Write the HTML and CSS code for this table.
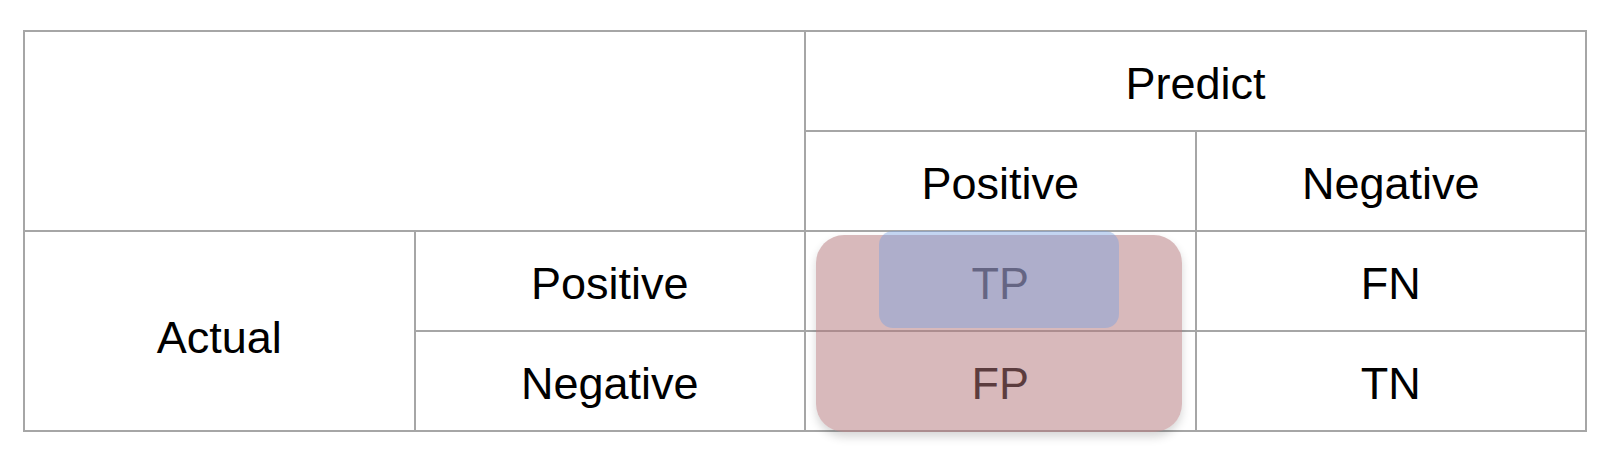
FILE: index.html
```html
<!DOCTYPE html>
<html>
<head>
<meta charset="utf-8">
<link rel="stylesheet" href="styles.css">
</head>
<body>
<div class="wrap">
  <div class="matrix">
    <div class="cell corner"></div>
    <div class="cell predict">Predict</div>
    <div class="cell pp">Positive</div>
    <div class="cell pn">Negative</div>
    <div class="cell actual">Actual</div>
    <div class="cell ap">Positive</div>
    <div class="cell tp">TP</div>
    <div class="cell fn">FN</div>
    <div class="cell an">Negative</div>
    <div class="cell fp">FP</div>
    <div class="cell tn">TN</div>
  </div>
  <div class="hl hl-red"></div>
  <div class="hl hl-blue"></div>
</div>
</body>
</html>
```
FILE: styles.css
```css
html, body {
  margin: 0;
  padding: 0;
  background: #ffffff;
}
body {
  width: 1616px;
  height: 462px;
  overflow: hidden;
}
.wrap {
  position: relative;
  margin: 30px 0 0 23px;
  width: 1564px;
  height: 402px;
}
.matrix {
  display: grid;
  box-sizing: border-box;
  width: 1564px;
  height: 402px;
  padding: 2px;
  gap: 2px;
  background: #a6a6a6;
  grid-template-columns: repeat(4, 1fr);
  grid-template-rows: repeat(4, 1fr);
  font-family: "Liberation Sans", Arial, sans-serif;
  font-size: 45px;
  color: #000;
}
.cell {
  background: #fff;
  display: flex;
  align-items: center;
  justify-content: center;
  padding-top: 6px;
  box-sizing: border-box;
}
.corner { grid-column: 1 / 3; grid-row: 1 / 3; }
.predict { grid-column: 3 / 5; grid-row: 1; }
.pp { grid-column: 3; grid-row: 2; }
.pn { grid-column: 4; grid-row: 2; }
.actual { grid-column: 1; grid-row: 3 / 5; padding-top: 13px; }
.ap { grid-column: 2; grid-row: 3; }
.tp { grid-column: 3; grid-row: 3; }
.fn { grid-column: 4; grid-row: 3; }
.an { grid-column: 2; grid-row: 4; }
.fp { grid-column: 3; grid-row: 4; }
.tn { grid-column: 4; grid-row: 4; }

.hl {
  position: absolute;
}
.hl-red {
  left: 793px;
  top: 205px;
  width: 366px;
  height: 197px;
  border-radius: 28px;
  background: rgba(179, 117, 121, 0.51);
  box-shadow: 0 5px 10px rgba(0, 0, 0, 0.16);
}
.hl-blue {
  left: 856px;
  top: 201px;
  width: 240px;
  height: 97px;
  border-radius: 14px;
  background: rgba(116, 160, 226, 0.42);
}
```
